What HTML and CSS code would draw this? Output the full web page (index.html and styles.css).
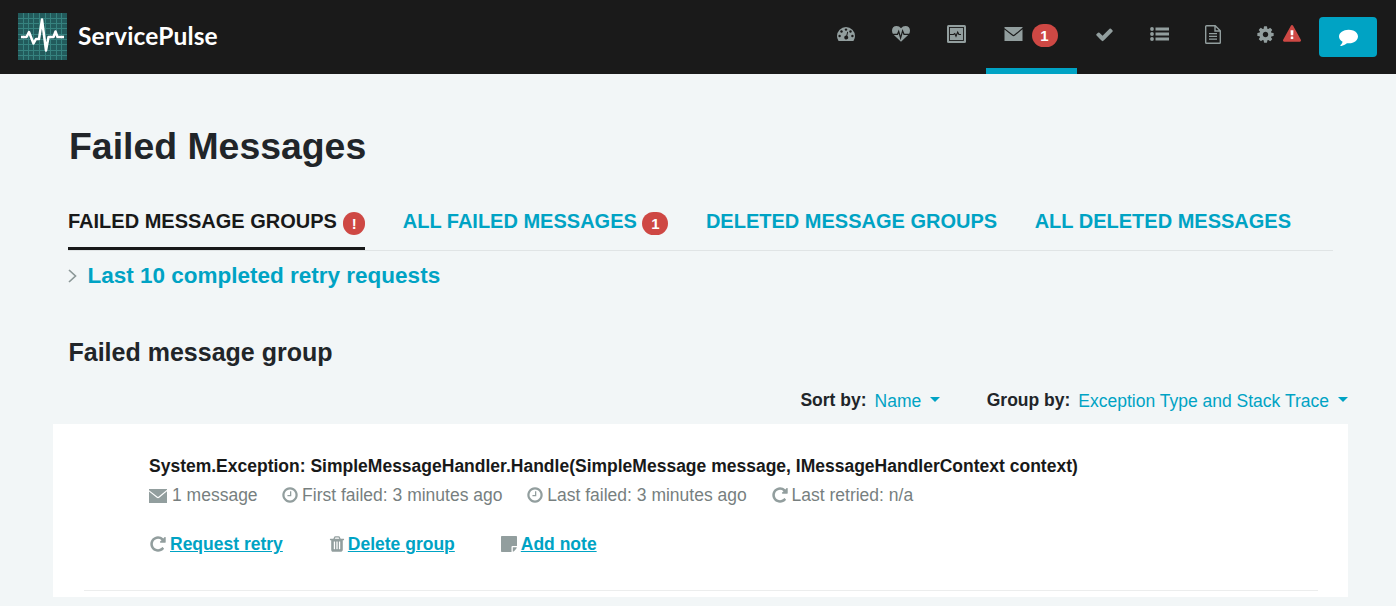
FILE: index.html
```html
<!DOCTYPE html>
<html lang="en">
<head>
<meta charset="utf-8">
<title>ServicePulse</title>
<link rel="stylesheet" href="styles.css">
</head>
<body>
<svg class="sprite" aria-hidden="true">
  <symbol id="mail" viewBox="0 0 18 14"><path d="M0 0H18V.8L9.8 7.6Q9 8.200 8.200 7.600L0 1.200Z"/><path d="M0 2.600L7.500 8.600Q9 9.700 10.500 8.600L18 2.300V14H0Z"/></symbol>
  <symbol id="clock" viewBox="0 0 1792 1792"><path d="M1024 544v448q0 14-9 23t-23 9h-320q-14 0-23-9t-9-23v-64q0-14 9-23t23-9h224v-352q0-14 9-23t23-9h64q14 0 23 9t9 23zm416 352q0-148-73-273t-198-198-273-73-273 73-198 198-73 273 73 273 198 198 273 73 273-73 198-198 73-273zm224 0q0 209-103 385.5t-279.5 279.5-385.5 103-385.5-103-279.5-279.5-103-385.5 103-385.5 279.5-279.5 385.5-103 385.5 103 279.5 279.5 103 385.5z"/></symbol>
  <symbol id="retry" viewBox="0 0 1792 1792"><path d="M1664 256v448q0 26-19 45t-45 19h-448q-42 0-59-40-17-39 14-69l138-138q-148-137-349-137-104 0-198.500 40.500t-163.500 109.500-109.500 163.500-40.500 198.500 40.500 198.500 109.500 163.500 163.500 109.500 198.500 40.500q119 0 225-52t179-147q7-10 23-12 15 0 25 9l137 138q9 8 9.500 20.500t-7.500 22.500q-109 132-264 204.500t-327 72.500q-156 0-298-61t-245-164-164-245-61-298 61-298 164-245 245-164 298-61q147 0 284.500 55.500t244.500 156.500l130-129q29-31 70-14 39 17 39 59z"/></symbol>
</svg>

<header class="navbar">
  <a class="brand">
    <svg class="brand-mark" viewBox="0 0 49 47" preserveAspectRatio="none">
      <rect width="49" height="48" fill="#225b5c"/>
      <path d="M5.500 0V48M10.500 0V48M15.500 0V48M21.500 0V48M27.500 0V48M32.500 0V48M38.500 0V48M43.500 0V48M0 5.500H49M0 10.500H49M0 15.500H49M0 21.500H49M0 26.500H49M0 31.500H49M0 37.500H49M0 42.500H49" stroke="#36827f" stroke-width="1"/>
      <path d="M3 24H8.500L11 19L15.500 30.500L18 26H21L24 6.500L28 37.500L30.500 24H35.500L37.500 18.500L39.500 24H46" fill="none" stroke="#fff" stroke-width="2.500" stroke-linejoin="round"/>
    </svg>
    <span class="brand-name">ServicePulse</span>
  </a>
  <nav class="menu">
    <a class="item"><svg width="18" height="14" viewBox="0 0 18 14"><path fill-rule="evenodd" d="M9 0A9 9 0 0 0 0 9Q0 11.700 1.300 13.500Q1.600 14 2.100 14H15.900Q16.400 14 16.700 13.500Q18 11.700 18 9A9 9 0 0 0 9 0Z"/><g fill="#1a1a1a"><circle cx="2.600" cy="9" r="1.200"/><circle cx="4.500" cy="4.500" r="1.200"/><circle cx="9" cy="2.600" r="1.200"/><circle cx="13.500" cy="4.500" r="1.200"/><circle cx="15.400" cy="9" r="1.200"/><path d="M10.200 4.700L11.100 5L10.300 8.800A2 2 0 1 1 9.300 8.500Z"/></g></svg></a>
    <a class="item"><svg width="18" height="16" viewBox="0 0 18 16"><path d="M9 15.700L1.600 8.700Q0 7 0 4.700Q0 0 4.700 0Q7.200 0 9 2.200Q10.800 0 13.300 0Q18 0 18 4.700Q18 7 16.400 8.700Z"/><path d="M1 8.300H5.500L6.700 5.400L8.600 12L10.600 4.800L12 8.300H17" fill="none" stroke="#1a1a1a" stroke-width="1.200"/></svg></a>
    <a class="item item-wide"><svg width="19" height="18" viewBox="0 0 19 18"><rect width="19" height="18" rx="1.500"/><rect x="2.500" y="2.500" width="14" height="13" fill="none" stroke="#1a1a1a" stroke-width=".9"/><path d="M3 9.500H6.500L7.800 8.500L9 11.300L10.700 7L11.900 9.500H14" fill="none" stroke="#1a1a1a" stroke-width="1.100"/></svg></a>
    <a class="item item-active"><svg width="19" height="14" preserveAspectRatio="none"><use href="#mail"/></svg><span class="badge badge-nav">1</span></a>
    <a class="item item-flush"><svg width="19" height="19" viewBox="0 0 1792 1792"><path d="M1671 566q0 40-28 68l-724 724-136 136q-28 28-68 28t-68-28l-136-136-362-362q-28-28-28-68t28-68l136-136q28-28 68-28t68 28l294 295 656-657q28-28 68-28t68 28l136 136q28 28 28 68z"/></svg></a>
    <a class="item item-flush"><svg width="19" height="14" viewBox="0 0 19 14"><circle cx="2" cy="2" r="1.900"/><circle cx="2" cy="7" r="1.900"/><circle cx="2" cy="12" r="1.900"/><path d="M5.500 .5H19V3.500H5.500ZM5.500 5.500H19V8.500H5.500ZM5.500 10.500H19V13.500H5.500Z"/></svg></a>
    <a class="item item-narrow"><svg width="16" height="19" viewBox="0 0 16 19"><path d="M1.600 .7H10.200L15.300 5.700V17.500Q15.300 18.300 14.500 18.300H1.500Q.7 18.300 .7 17.500V1.500Q.7 .7 1.600 .7ZM10 1V6H15" fill="none" stroke="#929e9e" stroke-width="1.400"/><path d="M4 8H12V9.300H4ZM4 10.800H12V12.100H4ZM4 13.500H12V14.800H4Z"/></svg></a>
    <a class="item item-config"><svg width="19" height="19" viewBox="0 0 1792 1792"><path d="M1152 896q0-106-75-181t-181-75-181 75-75 181 75 181 181 75 181-75 75-181zm512-109v222q0 12-8 23t-20 13l-185 28q-19 54-39 91 35 50 107 138 10 12 10 25t-9 23q-27 37-99 108t-94 71q-12 0-26-9l-138-108q-44 23-91 38-16 136-29 186-7 28-36 28h-222q-14 0-24.500-8.500t-11.500-21.500l-28-184q-49-16-90-37l-141 107q-10 9-25 9-14 0-25-11-126-114-165-168-7-10-7-23 0-12 8-23 15-21 51-66.500t54-70.500q-27-50-41-99l-183-27q-13-2-21-12.500t-8-23.500v-222q0-12 8-23t19-13l186-28q14-46 39-92-40-57-107-138-10-12-10-24 0-10 9-23 26-36 98.500-107.500t94.500-71.500q13 0 26 10l138 107q44-23 91-38 16-136 29-186 7-28 36-28h222q14 0 24.500 8.500t11.500 21.500l28 184q49 16 90 37l142-107q9-9 24-9 13 0 25 10 129 119 165 170 7 8 7 22 0 12-8 23-15 21-51 66.500t-54 70.500q26 50 41 98l183 28q13 2 21 12.500t8 23.500z"/></svg><svg class="warn" width="18" height="18" viewBox="0 0 1792 1792"><path fill="#fff" d="M700 480H1090V1440H700Z"/><path d="M1024 1375v-190q0-14-9.500-23.500t-22.500-9.500h-192q-13 0-22.500 9.500t-9.500 23.500v190q0 14 9.500 23.500t22.500 9.500h192q13 0 22.500-9.500t9.500-23.500zm-2-374l18-459q0-12-10-19-13-11-24-11h-220q-11 0-24 11-10 7-10 21l17 457q0 10 10 16.500t24 6.500h185q14 0 23.500-6.500t10.500-16.500zm-14-934l768 1408q35 63-2 126-17 29-46.500 46t-63.500 17h-1536q-34 0-63.500-17t-46.500-46q-37-63-2-126l768-1408q17-31 47-49t65-18 65 18 47 49z"/></svg></a>
  </nav>
  <button class="feedback" aria-label="Feedback"><svg width="19" height="19" viewBox="0 0 1792 1792"><path d="M1792 896q0 174-120 321.500t-326 233-450 85.500q-70 0-145-8-198 175-460 242-49 14-114 22-17 2-30.500-9t-17.500-29v-1q-3-4-.5-12t2-10 4.500-9.500l6-9 7-8.500 8-9q7-8 31-34.500t34.500-38 31-39.500 32.500-51 27-59 26-76q-157-89-247.500-220t-90.500-281q0-130 71-248.500t191-204.500 286-136.500 348-50.500q244 0 450 85.500t326 233 120 321.500z"/></svg></button>
</header>

<main class="page">
  <h1>Failed Messages</h1>
  <div class="tabs">
    <a class="tab tab-active">FAILED MESSAGE GROUPS<span class="badge badge-alert">!</span></a>
    <a class="tab">ALL FAILED MESSAGES<span class="badge">1</span></a>
    <a class="tab">DELETED MESSAGE GROUPS</a>
    <a class="tab">ALL DELETED MESSAGES</a>
  </div>
  <div class="history">
    <svg width="9" height="14" viewBox="0 0 9 14"><path d="M1 1L7.500 7L1 13" fill="none" stroke="#8c9898" stroke-width="1.700"/></svg>
    <a>Last 10 completed retry requests</a>
  </div>
  <h2>Failed message group</h2>
  <div class="filters">
    <div class="filter"><b>Sort by:</b><a>Name</a><i class="caret"></i></div>
    <div class="filter"><b>Group by:</b><a>Exception Type and Stack Trace</a><i class="caret"></i></div>
  </div>
  <section class="card">
    <div class="group">
      <h3>System.Exception: SimpleMessageHandler.Handle(SimpleMessage message, IMessageHandlerContext context)</h3>
      <div class="meta">
        <span class="count"><svg width="18" height="14"><use href="#mail"/></svg>1 message</span>
        <span class="first"><svg width="18" height="18"><use href="#clock"/></svg>First failed: 3 minutes ago</span>
        <span class="last"><svg width="18" height="18"><use href="#clock"/></svg>Last failed: 3 minutes ago</span>
        <span class="retried"><svg width="18" height="18"><use href="#retry"/></svg>Last retried: n/a</span>
      </div>
      <div class="actions">
        <span class="act-retry"><svg width="18" height="18"><use href="#retry"/></svg><a>Request retry</a></span>
        <span class="act-delete"><svg width="18" height="18" viewBox="0 0 1792 1792"><path d="M704 1376v-704q0-14-9-23t-23-9h-64q-14 0-23 9t-9 23v704q0 14 9 23t23 9h64q14 0 23-9t9-23zm256 0v-704q0-14-9-23t-23-9h-64q-14 0-23 9t-9 23v704q0 14 9 23t23 9h64q14 0 23-9t9-23zm256 0v-704q0-14-9-23t-23-9h-64q-14 0-23 9t-9 23v704q0 14 9 23t23 9h64q14 0 23-9t9-23zm-544-992h448l-48-117q-7-9-17-11h-317q-10 2-17 11zm928 32v64q0 14-9 23t-23 9h-96v948q0 83-47 143.500t-113 60.500h-832q-66 0-113-58.500t-47-141.500v-952h-96q-14 0-23-9t-9-23v-64q0-14 9-23t23-9h309l70-167q15-37 54-63t79-26h320q40 0 79 26t54 63l70 167h309q14 0 23 9t9 23z"/></svg><a>Delete group</a></span>
        <span class="act-note"><svg width="16" height="16" viewBox="0 0 16 16"><path d="M.8 0H15.200Q16 0 16 .8V10H11.500Q10.500 10 10.500 11V16H.8Q0 16 0 15.200V.8Q0 0 .8 0ZM11.800 11.300H15.800Q15.700 12.300 15 13L13.500 14.700Q12.800 15.500 11.800 15.600Z"/></svg><a>Add note</a></span>
      </div>
    </div>
  </section>
</main>
</body>
</html>
```
FILE: styles.css
```css
* { box-sizing: border-box; }
body {
  margin: 0;
  background: #f2f6f7;
  color: #212529;
  font-family: "Liberation Sans", Arial, sans-serif;
  font-size: 17.5px;
  line-height: 25px;
}
svg { display: block; flex: none; fill: #929e9e; }
.sprite { display: none; }
h1, h2, h3 { margin: 0; }
a { color: #00a3c4; }

.navbar {
  display: flex;
  height: 74px;
  padding-left: 18px;
  padding-right: 19px;
  background: #1a1a1a;
}
.brand { display: flex; align-items: center; gap: 11px; padding-bottom: 1px; color: #fff; }
.brand-mark { width: 49px; height: 47px; }
.brand-name { padding-bottom: 1px; font: 700 24.500px/30px Lato, sans-serif; letter-spacing: .15px; }
.menu { display: flex; margin-left: auto; }
.item {
  display: flex;
  align-items: center;
  justify-content: center;
  width: 55px;
  padding: 0 2px 6px 0;
}
.item-flush { padding-right: 0; }
.item-wide { width: 57px; }
.item-narrow { width: 53px; }
.item-active { width: 91px; border-bottom: 6px solid #00a3c4; padding-bottom: 0; }
.item-config { width: 79px; gap: 8px; padding-right: 3px; }
.warn { fill: #ce4844; margin-top: -1px; }
.badge {
  display: inline-flex;
  align-items: center;
  justify-content: center;
  width: 26px;
  height: 23px;
  border-radius: 12.5px;
  background: #ce4844;
  color: #fff;
  font-size: 15px;
  font-weight: bold;
  line-height: 23px;
}
.badge-nav { margin: 2px 0 0 9px; }
.badge-alert { width: 22px; }
.feedback {
  display: flex;
  align-items: center;
  justify-content: center;
  width: 58px;
  height: 40px;
  margin-top: 17px;
  padding: 0 0 2px;
  border: 0;
  border-radius: 4px;
  background: #00a3c4;
}
.feedback svg { fill: #fff; }

.page { padding: 50px 48px 0 53px; }
h1 { padding-left: 16px; font-size: 37.4px; line-height: 44px; }
.tabs {
  display: flex;
  gap: 37.6px;
  height: 51px;
  margin: 32px 15px 0;
  border-bottom: 1px solid #e0e4e5;
}
.tab {
  display: flex;
  height: 50px;
  padding-top: 8px;
  font-size: 20px;
  font-weight: bold;
  line-height: 26px;
  white-space: nowrap;
}
.tab .badge { margin: 4px 0 0 5.5px; }
.tab .badge-alert { margin-left: 6.2px; }
.tab-active { color: #181919; border-bottom: 3px solid #181919; }
.history {
  display: flex;
  align-items: center;
  gap: 10.5px;
  margin: 11px 0 0 15px;
  font-size: 22.5px;
  font-weight: bold;
  line-height: 28px;
}
h2 { margin: 46px 0 0 15.5px; font-size: 25px; line-height: 32px; }
.filters { display: flex; justify-content: flex-end; gap: 46.5px; height: 56px; padding-top: 20px; }
.filter { display: flex; align-items: flex-start; height: 26px; }
.filter a { margin-left: 8px; padding-top: 1px; }
.caret {
  width: 10px;
  height: 5px;
  margin: 9px 0 0 9px;
  border: 5px solid transparent;
  border-top-color: #00a3c4;
  border-bottom: 0;
}
.card { height: 173px; padding: 0 30px 6px 31px; background: #fff; }
.group { height: 167px; padding: 30px 0 0 65px; border-bottom: 1px solid #eceded; }
h3 { color: #181919; font-size: 17.5px; line-height: 25px; white-space: nowrap; }
.meta { display: flex; margin-top: 4px; color: #777f7f; }
.meta span, .actions span { display: flex; align-items: center; white-space: nowrap; }
.meta svg, .actions svg { margin-bottom: 2px; }
.meta .count svg { margin-bottom: 0; }
.count { gap: 5px; }
.first { gap: 3px; margin-left: 23.5px; }
.last, .retried { gap: 3px; margin-left: 23.8px; }
.actions { display: flex; margin-top: 24px; font-weight: bold; }
.actions a { text-decoration: underline; }
.act-retry { gap: 3px; }
.act-delete { gap: 2px; margin-left: 45px; }
.act-note { gap: 4px; margin-left: 46px; }
```
